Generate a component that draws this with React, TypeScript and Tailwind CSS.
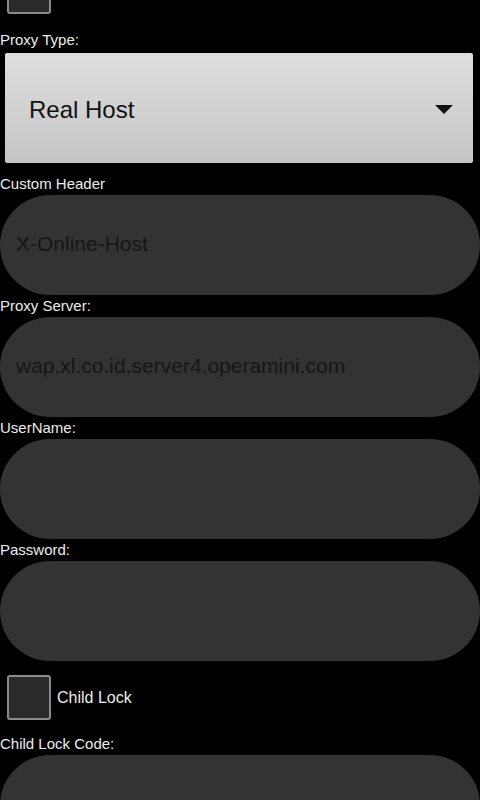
import { useState } from "react";

const font = { fontFamily: '"Liberation Sans", Arial, sans-serif' };

const Field = ({ label, value }: { label: string; value?: string }) => (
  <div>
    <div className="text-[15px] leading-[22px] text-[#ececec]">{label}</div>
    <div className="h-[100px] rounded-full bg-[#333333] flex items-center pl-4">
      <span className="text-[21px] text-[#161616] -mt-[3px]">{value}</span>
    </div>
  </div>
);

const CheckBox = ({ checked, onClick, className = "" }: { checked: boolean; onClick: () => void; className?: string }) => (
  <button
    onClick={onClick}
    className={`w-[44px] h-[45px] rounded-[3px] border-2 border-[#8a8a8a] bg-[#2a2a2a] flex items-center justify-center ${className}`}
  >
    {checked && <span className="text-[#33b5e5] text-2xl leading-none">✓</span>}
  </button>
);

export default function App() {
  const [lock, setLock] = useState(false);
  const [top, setTop] = useState(false);

  return (
    <div className="w-[480px] h-[800px] bg-black overflow-hidden" style={font}>
      <div className="pl-[7px] h-[14px] overflow-hidden">
        <CheckBox checked={top} onClick={() => setTop(!top)} className="-mt-[31px]" />
      </div>

      <div className="mt-[15px] text-[15px] leading-[22px] text-[#ececec]">Proxy Type:</div>
      <div className="ml-[5px] mr-[7px] mt-[2px] h-[110px] rounded-[2px] bg-gradient-to-b from-[#dedede] to-[#c5c5c5] flex items-center pl-6 pr-5">
        <span className="flex-1 text-[24px] text-[#111111] mt-[3px]">Real Host</span>
        <svg width="18" height="9" viewBox="0 0 18 9" className="mt-[3px]">
          <polygon points="0,0 18,0 9,9" fill="#111111" />
        </svg>
      </div>

      <div className="mt-[10px]">
        <Field label="Custom Header" value="X-Online-Host" />
        <Field label="Proxy Server:" value="wap.xl.co.id.server4.operamini.com" />
        <Field label="UserName:" />
        <Field label="Password:" />
      </div>

      <div className="mt-[14px] flex items-center pl-[7px] gap-[6px]">
        <CheckBox checked={lock} onClick={() => setLock(!lock)} />
        <span className="text-[16px] text-[#ececec]">Child Lock</span>
      </div>

      <div className="mt-[13px]">
        <Field label="Child Lock Code:" />
      </div>
    </div>
  );
}
